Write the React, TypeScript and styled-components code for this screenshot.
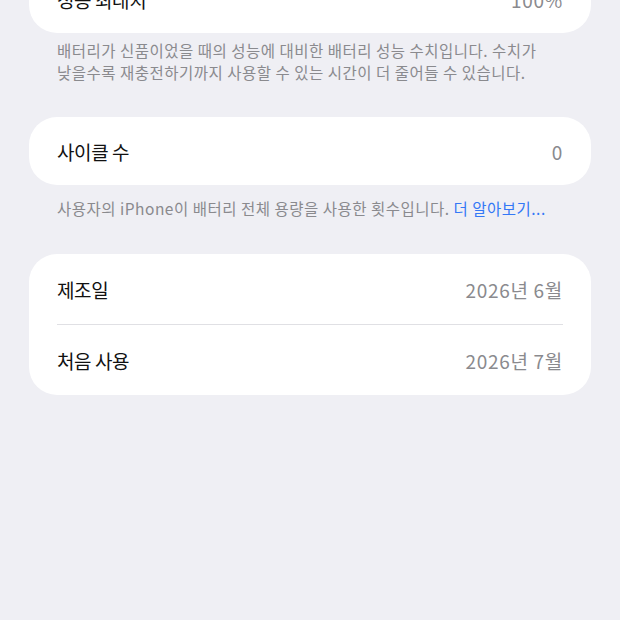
import * as React from "react";
import styled, { createGlobalStyle } from "styled-components";

const GlobalStyle = createGlobalStyle`
  html, body {
    margin: 0;
    padding: 0;
    background: #efeff4;
  }
  body {
    font-family: "Noto Sans CJK KR", "Noto Sans", sans-serif;
    -webkit-font-smoothing: antialiased;
  }
`;

const Page = styled.div`
  width: 620px;
  height: 620px;
  overflow: hidden;
  background: #efeff4;
  padding: 0 29px;
  box-sizing: border-box;
`;

const Card = styled.div<{ $offset?: number }>`
  background: #ffffff;
  border-radius: 28px;
  margin-top: ${(p) => p.$offset ?? 0}px;
  padding: 0 28px;
`;

const Row = styled.div<{ $divider?: boolean; $h?: number }>`
  display: flex;
  align-items: center;
  justify-content: space-between;
  height: ${(p) => p.$h ?? 70}px;
  box-sizing: border-box;
  border-bottom: ${(p) => (p.$divider ? "1px solid #e0e0e4" : "none")};
`;

const Label = styled.span`
  font-size: 19px;
  color: #111;
  letter-spacing: -0.4px;
`;

const Value = styled.span`
  font-size: 19px;
  color: #8a8a8e;
  letter-spacing: 0.7px;
`;

const Caption = styled.p<{ $top: number }>`
  margin: 0;
  padding: ${(p) => p.$top}px 28px 0;
  font-size: 15.5px;
  line-height: 22px;
  color: #8a8a8e;
  letter-spacing: 0.5px;
`;

const More = styled.span`
  color: #3478f6;
`;

const Gap = styled.div<{ $h: number }>`
  height: ${(p) => p.$h}px;
`;

export default function App() {
  return (
    <>
      <GlobalStyle />
      <Page>
        <Card $offset={-35}>
          <Row $h={68}>
            <Label>성능 최대치</Label>
            <Value>100%</Value>
          </Row>
        </Card>
        <Caption $top={6}>
          배터리가 신품이었을 때의 성능에 대비한 배터리 성능 수치입니다. 수치가
          <br />
          낮을수록 재충전하기까지 사용할 수 있는 시간이 더 줄어들 수 있습니다.
        </Caption>
        <Gap $h={34} />
        <Card>
          <Row $h={68}>
            <Label>사이클 수</Label>
            <Value>0</Value>
          </Row>
        </Card>
        <Caption $top={12}>
          사용자의 iPhone이 배터리 전체 용량을 사용한 횟수입니다. <More>더 알아보기...</More>
        </Caption>
        <Gap $h={35} />
        <Card>
          <Row $divider $h={71}>
            <Label>제조일</Label>
            <Value>2026년 6월</Value>
          </Row>
          <Row>
            <Label>처음 사용</Label>
            <Value>2026년 7월</Value>
          </Row>
        </Card>
      </Page>
    </>
  );
}
